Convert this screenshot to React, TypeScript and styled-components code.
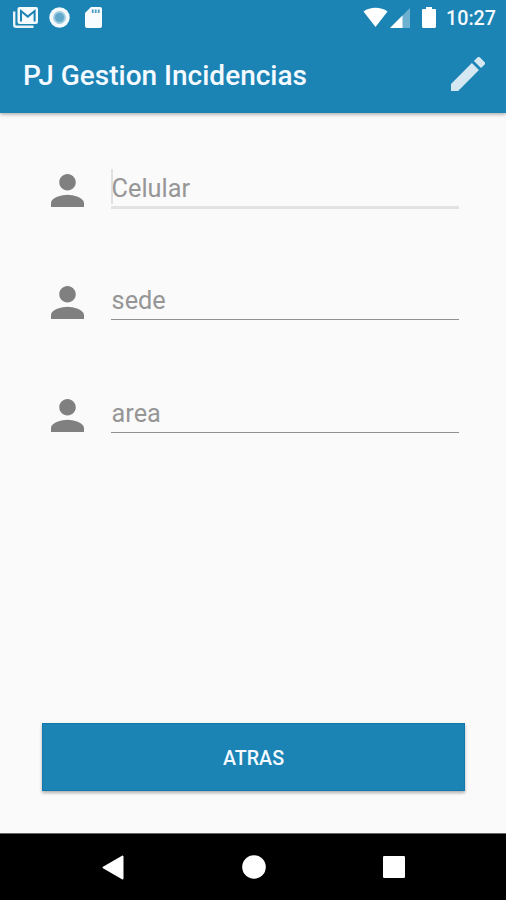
import React from 'react';
import styled, { createGlobalStyle } from 'styled-components';

const BLUE = '#1b84b5';

const GlobalStyle = createGlobalStyle`
  * { box-sizing: border-box; }
  body { margin: 0; background: #fafafa; }
`;

const Screen = styled.div`
  display: flex;
  flex-direction: column;
  width: 506px;
  height: 900px;
  overflow: hidden;
  background: #fafafa;
  font-family: Roboto, sans-serif;
`;

const Header = styled.header`
  height: 113px;
  flex: none;
  background: ${BLUE};
  box-shadow: 0 1px 4px rgba(0, 0, 0, 0.38);
`;

const StatusBar = styled.div`
  display: flex;
  align-items: center;
  height: 35px;
  padding: 0 11px 0 13px;
`;

const Glyph = styled.svg<{ $gap?: number }>`
  display: block;
  flex: none;
  margin-left: ${({ $gap = 0 }) => $gap}px;
`;

const Clock = styled.time`
  margin-left: 10px;
  padding-top: 2px;
  width: 49px;
  color: #f4fafd;
  font-size: 19.7px;
  font-weight: 500;
  line-height: 35px;
  white-space: nowrap;
`;

const StatusGroup = styled.div`
  display: flex;
  align-items: center;
  height: 35px;
  margin-left: auto;
`;

const Toolbar = styled.div`
  display: flex;
  align-items: center;
  justify-content: space-between;
  height: 78px;
  padding: 0 21px 0 23px;
`;

const Title = styled.h1`
  margin: 4px 0 0;
  color: #f4faff;
  font-size: 28px;
  font-weight: 500;
  line-height: 34px;
  white-space: nowrap;
`;

const EditButton = styled.button`
  padding: 0;
  border: 0;
  background: none;
`;

const Form = styled.main`
  display: flex;
  flex: 1;
  flex-direction: column;
  padding: 56px 41px 42px 42px;
`;

const Field = styled.label`
  display: flex;
  height: 112.4px;
  padding: 5px 6px 0 9px;
`;

const InputBox = styled.span<{ $focused?: boolean }>`
  display: flex;
  flex: 1;
  height: ${({ $focused }) => ($focused ? 35 : 34)}px;
  margin-left: 27px;
  border-bottom: ${({ $focused }) => ($focused ? '3px solid #e2e2e2' : '1.5px solid #919191')};
`;

const Caret = styled.span`
  width: 2px;
  height: 35px;
  margin: -5px -2px 0 0;
  flex: none;
  background: #e0e0e0;
`;

const Hint = styled.span`
  margin-left: 0.6px;
  color: #969696;
  font-size: 25.3px;
  line-height: 30px;
`;

const BackButton = styled.button`
  height: 68px;
  margin: auto 0 0;
  padding: 2px 0 0;
  border: 1px solid #1179ad;
  background: ${BLUE};
  box-shadow: 0 2px 3px rgba(0, 0, 0, 0.3);
  color: #f4faff;
  font-family: inherit;
  font-size: 19.7px;
  font-weight: 500;
`;

const NavBar = styled.nav`
  display: flex;
  align-items: center;
  height: 67px;
  flex: none;
  padding: 0 101px 0 102px;
  justify-content: space-between;
  border-top: 1px solid #666;
  background: #000;
`;

const fields = [
  { label: 'Celular', focused: true },
  { label: 'sede', focused: false },
  { label: 'area', focused: false },
];

const PersonIcon = () => (
  <Glyph width="33" height="33" viewBox="4 4 16 16" fill="#808080">
    <path d="M12 12c2.21 0 4-1.79 4-4s-1.79-4-4-4-4 1.79-4 4 1.79 4 4 4zm0 2c-2.67 0-8 1.34-8 4v2h16v-2c0-2.66-5.33-4-8-4z" />
  </Glyph>
);

export default function App() {
  return (
    <Screen>
      <GlobalStyle />
      <Header>
        <StatusBar>
          <Glyph width="25" height="21" viewBox="0 0 25 21" fill="none">
            <path d="M1.2 4.5V17.8q0 2 2 2h17.3" stroke="#e9f3f8" strokeWidth="2.4" />
            <rect x="4.5" y="0" width="20.5" height="17" rx="2" fill="#f6fbfd" />
            <path d="M8 14.5V4l6.8 5.6L21.6 4v10.5" stroke={BLUE} strokeWidth="2" />
          </Glyph>
          <Glyph $gap={11} width="21" height="21" viewBox="0 0 21 21">
            <circle cx="10.5" cy="10.5" r="10.2" fill="#f4fafc" />
            <circle cx="10.5" cy="10.5" r="6.4" fill="#9fcbe0" />
            <circle cx="10.5" cy="10.5" r="4.5" fill="#62a8ca" />
          </Glyph>
          <Glyph $gap={15} width="17" height="21" viewBox="0 0 17 21">
            <path d="M6 0h9q2 0 2 2v17q0 2-2 2H2q-2 0-2-2V6z" fill="#f8fcfe" />
            <path d="M7.7 2.5V6M10.7 2.5V6M13.7 2.5V6" stroke="#4b9dc3" strokeWidth="1.8" />
          </Glyph>
          <StatusGroup>
            <Glyph width="25" height="21" viewBox="0 0 26 21">
              <path d="M.5 4.2C7.5-1 18.5-1 25.5 4.2L13 20.5z" fill="#fff" />
            </Glyph>
            <Glyph $gap={2} width="20" height="20" viewBox="0 0 20 20">
              <path d="M0 20 20 0v20z" fill="#6db0cf" />
              <path d="M0 20 12.5 7.5V20z" fill="#fff" />
            </Glyph>
            <Glyph $gap={12} width="14" height="21" viewBox="0 0 14 21">
              <path d="M4 0h6v2h3q1 0 1 1v16.5q0 1.5-1.5 1.5h-11Q0 21 0 19.5V3q0-1 1-1h3z" fill="#fff" />
            </Glyph>
            <Clock>10:27</Clock>
          </StatusGroup>
        </StatusBar>
        <Toolbar>
          <Title>PJ Gestion Incidencias</Title>
          <EditButton aria-label="Editar">
            <Glyph width="34" height="34" viewBox="3 3 18 18" fill="#d5e8f1">
              <path d="M3 17.25V21h3.75L17.81 9.94l-3.75-3.75L3 17.25zM20.71 7.04a1 1 0 0 0 0-1.41l-2.34-2.34a1 1 0 0 0-1.41 0l-1.83 1.83 3.75 3.75 1.83-1.83z" />
            </Glyph>
          </EditButton>
        </Toolbar>
      </Header>
      <Form>
        {fields.map(({ label, focused }) => (
          <Field key={label}>
            <PersonIcon />
            <InputBox $focused={focused}>
              {focused && <Caret />}
              <Hint>{label}</Hint>
            </InputBox>
          </Field>
        ))}
        <BackButton>ATRAS</BackButton>
      </Form>
      <NavBar>
        <Glyph width="22" height="25" viewBox="0 0 22 25">
          <path d="M20.5 1.5v22L1.5 12.5z" fill="#fff" stroke="#fff" strokeWidth="2" strokeLinejoin="round" />
        </Glyph>
        <Glyph width="24" height="24" viewBox="0 0 24 24">
          <circle cx="12" cy="12" r="11.8" fill="#fff" />
        </Glyph>
        <Glyph width="22" height="22" viewBox="0 0 22 22">
          <rect width="22" height="22" rx="1.2" fill="#fff" />
        </Glyph>
      </NavBar>
    </Screen>
  );
}
